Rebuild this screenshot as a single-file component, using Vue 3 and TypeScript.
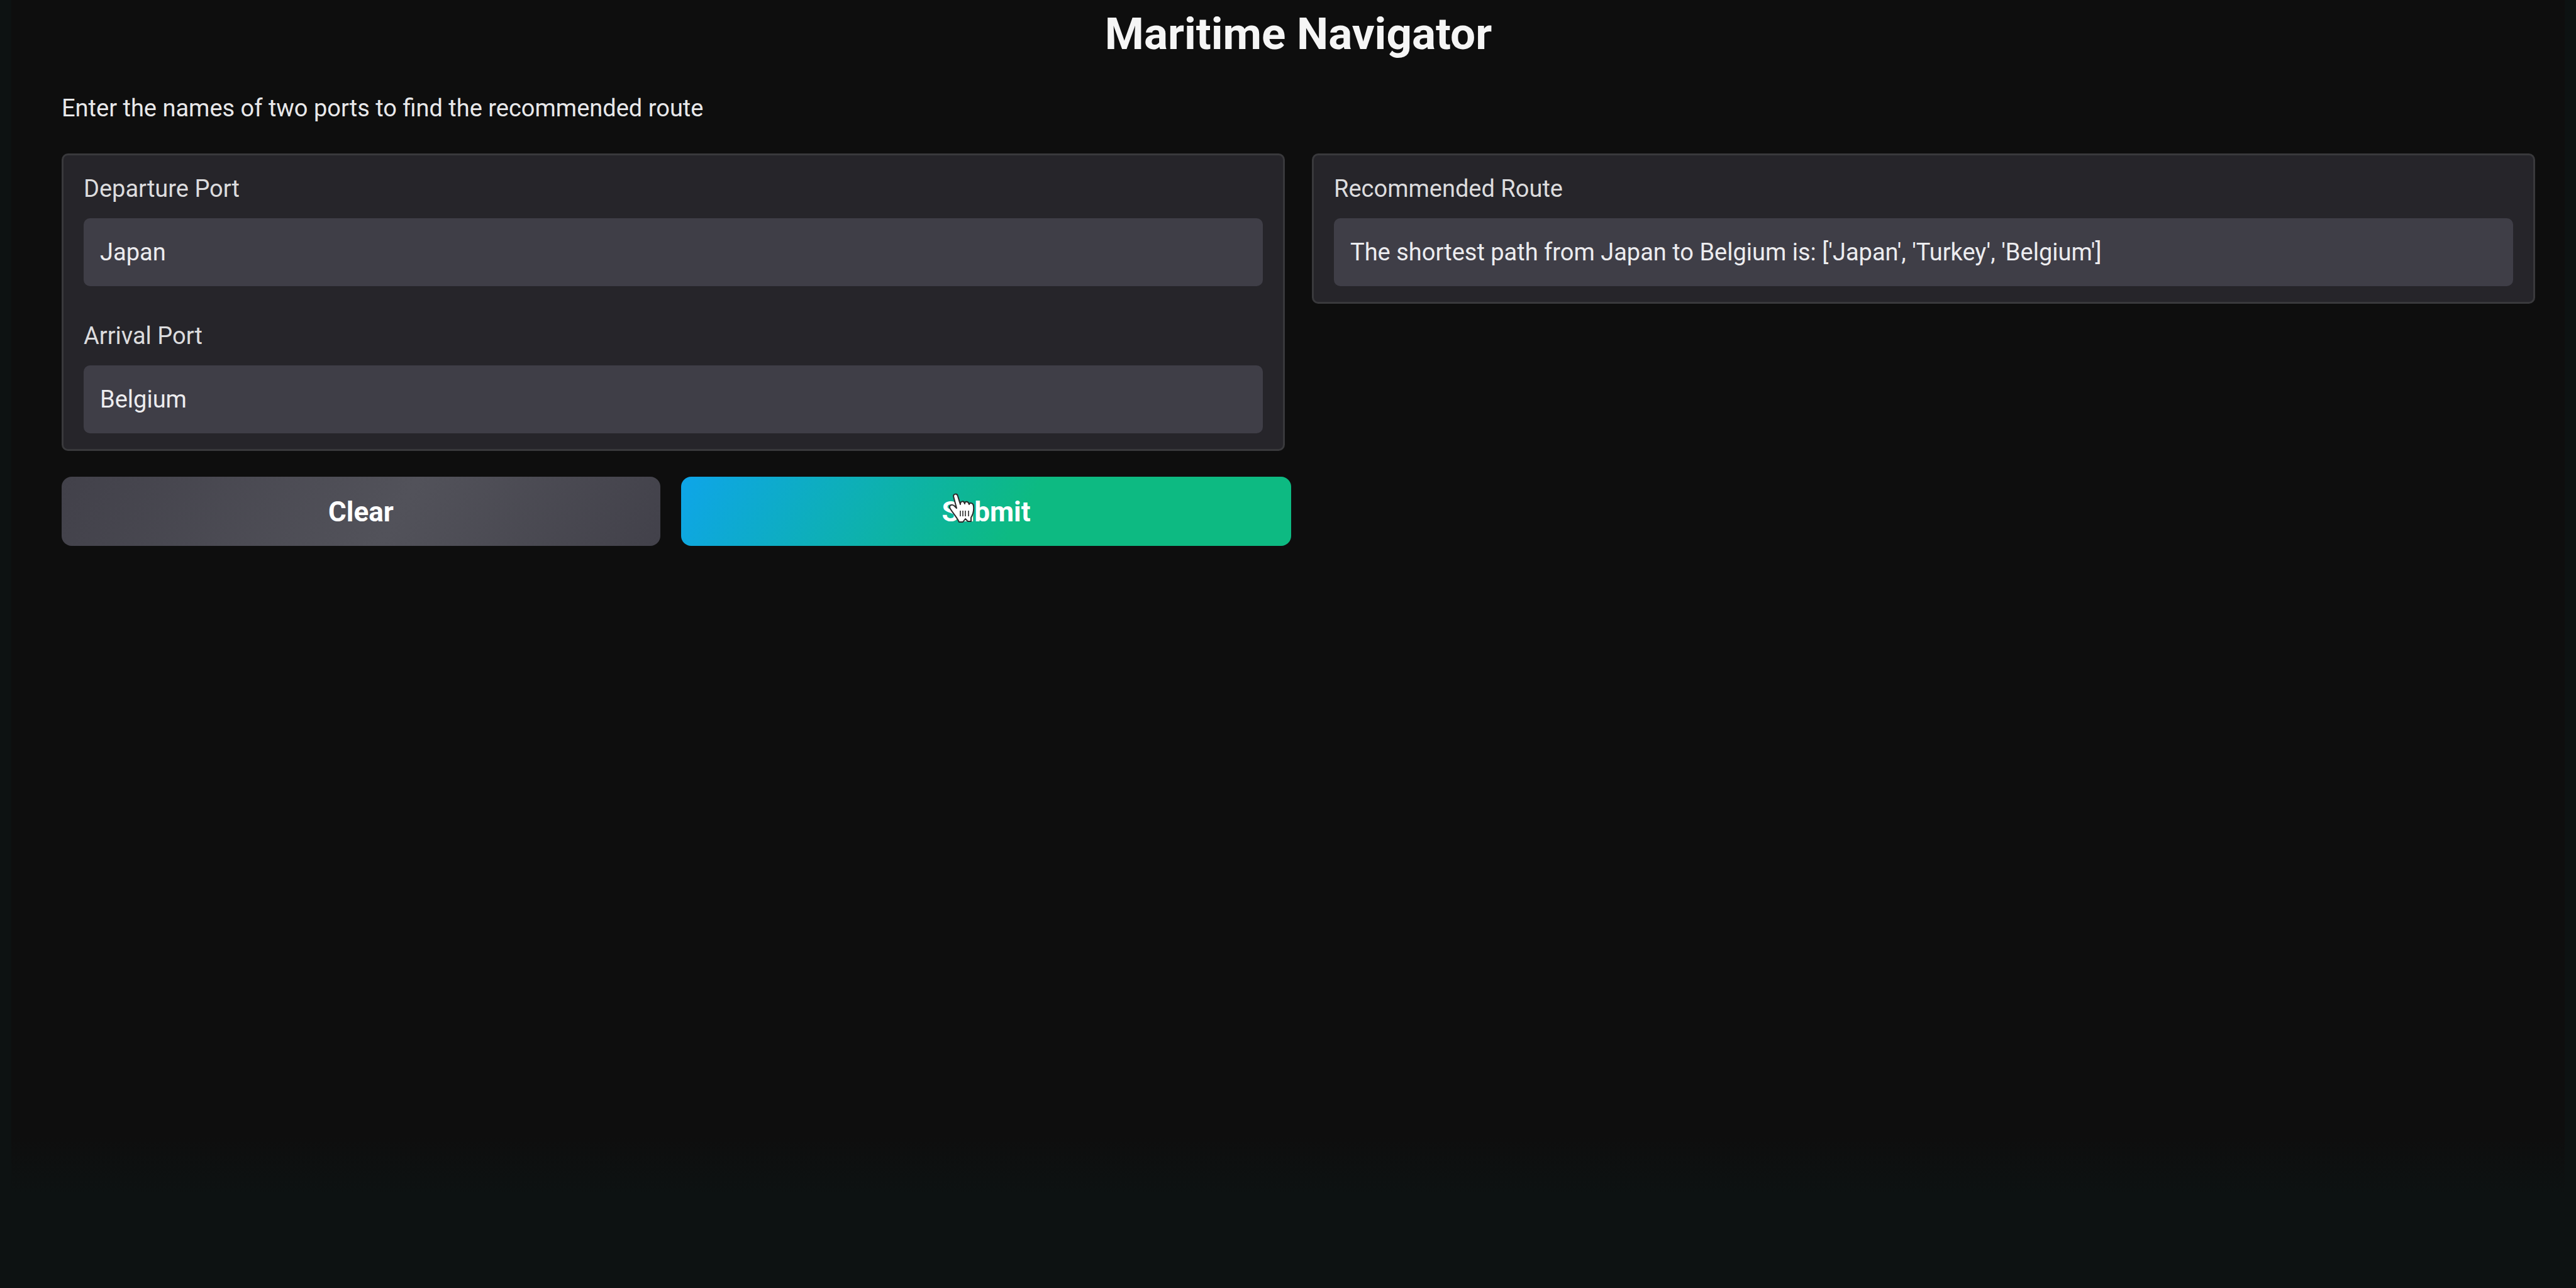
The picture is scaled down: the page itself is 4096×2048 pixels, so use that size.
<script setup lang="ts">
import { ref } from 'vue'

const departure = ref('Japan')
const arrival = ref('Belgium')
const route = ref("The shortest path from Japan to Belgium is: ['Japan', 'Turkey', 'Belgium']")

const neighbours: Record<string, string[]> = {
  Japan: ['Turkey'],
  Turkey: ['Japan', 'Belgium'],
  Belgium: ['Turkey'],
}

function findRoute() {
  const queue: string[][] = [[departure.value]]
  const seen = new Set([departure.value])
  while (queue.length) {
    const path = queue.shift()!
    const last = path[path.length - 1]
    if (last === arrival.value) {
      const names = path.map((p) => `'${p}'`).join(', ')
      route.value = `The shortest path from ${departure.value} to ${arrival.value} is: [${names}]`
      return
    }
    for (const next of neighbours[last] ?? []) {
      if (!seen.has(next)) {
        seen.add(next)
        queue.push([...path, next])
      }
    }
  }
  route.value = ''
}

function clearAll() {
  departure.value = ''
  arrival.value = ''
  route.value = ''
}
</script>

<template>
  <div class="page">
    <main class="app">
      <h1>Maritime Navigator</h1>
      <p class="description">Enter the names of two ports to find the recommended route</p>
      <form class="columns" @submit.prevent="findRoute">
        <div class="column">
          <section class="panel">
            <div class="field">
              <label for="departure">Departure Port</label>
              <input id="departure" v-model="departure" type="text" />
            </div>
            <div class="field">
              <label for="arrival">Arrival Port</label>
              <input id="arrival" v-model="arrival" type="text" />
            </div>
          </section>
          <div class="actions">
            <button class="clear" type="button" @click="clearAll">Clear</button>
            <button class="submit" type="submit">
              Submit
              <svg class="pointer" viewBox="0 0 42 48" aria-hidden="true">
                <path
                  d="M8 5C8 1 14 0 15 5L19 18C19 12 25 12 26 17C26 12 32 13 33 18C34 14 40 16 40 21C41 29 39 34 36 39V45H31L27 41L23 46H17C14 39 8 33 3 25C0 20 5 17 9 20L13 24Z"
                  fill="#fff" stroke="#2b2b2b" stroke-width="2" stroke-linejoin="round"
                />
                <path d="M19 28V37M23 28V37M27 28V37M32 28V37" fill="none" stroke="#555" stroke-width="2" />
              </svg>
            </button>
          </div>
        </div>
        <div class="column">
          <section class="panel">
            <div class="field">
              <label for="route">Recommended Route</label>
              <input id="route" v-model="route" type="text" readonly />
            </div>
          </section>
        </div>
      </form>
    </main>
  </div>
</template>

<style>
body {
  background: #0d1212;
}
</style>

<style scoped>
.page {
  min-height: 100vh;
  box-sizing: border-box;
  padding: 0 18px;
  font-family: Roboto, 'Liberation Sans', sans-serif;
  font-size: 38px;
  line-height: 48px;
  color: #e8e8ea;
}
.app {
  min-height: calc(100vh - 150px);
  box-sizing: border-box;
  padding: 10px 47px 0 80px;
  background: linear-gradient(to top, #0d1212, #0e0e0e 90px);
}
h1 {
  margin: 0;
  font-size: 71px;
  line-height: 88px;
  font-weight: 700;
  text-align: center;
  color: #f5f5f5;
}
.description {
  margin: 50px 0 48px;
}
.columns {
  display: grid;
  grid-template-columns: 1fr 1fr;
  gap: 43px;
  align-items: start;
}
.panel {
  display: flex;
  flex-direction: column;
  gap: 55px;
  padding: 29px 32px 25px;
  border: 3px solid #39393c;
  border-radius: 10px;
  background: #26252a;
}
.field {
  display: flex;
  flex-direction: column;
  gap: 23px;
}
label {
  color: #dcdcde;
}
input {
  box-sizing: border-box;
  width: 100%;
  height: 108px;
  padding: 0 26px;
  border: 0;
  border-radius: 10px;
  outline: 0;
  background: #3f3e47;
  color: #ececef;
  font: inherit;
}
.actions {
  display: flex;
  gap: 33px;
  margin: 41px -10px 0 0;
}
button {
  position: relative;
  height: 110px;
  padding: 2px 0 0;
  border: 0;
  border-radius: 16px;
  color: #fff;
  font: inherit;
  font-size: 44px;
  font-weight: 700;
  cursor: pointer;
}
.clear {
  flex: 952;
  background: linear-gradient(120deg, #42414a, #52525a 56%, #42414a);
}
.submit {
  flex: 970;
  background: linear-gradient(120deg, #0ea5e9, #0dba82 56%);
}
.pointer {
  position: absolute;
  top: 26px;
  left: calc(50% - 60px);
  width: 42px;
  height: 48px;
}
</style>
